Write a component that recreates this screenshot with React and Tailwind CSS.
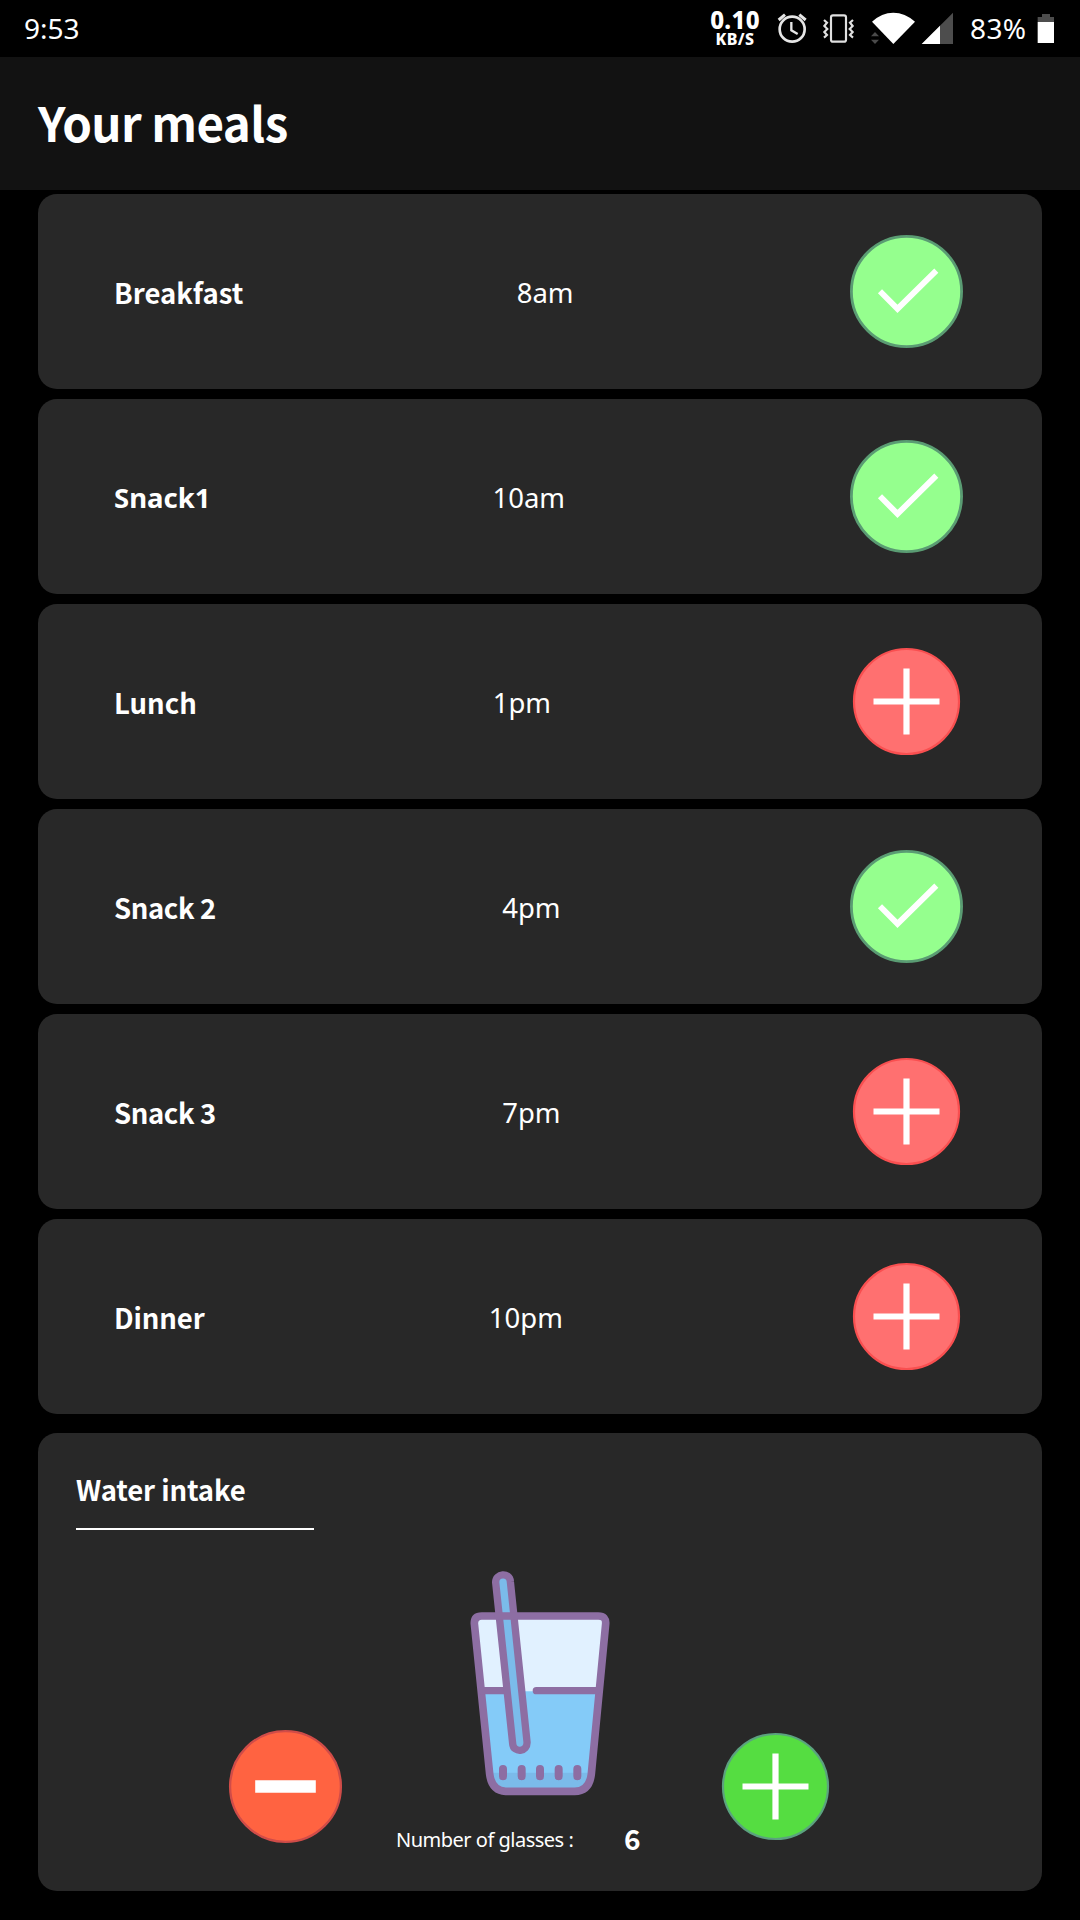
import React from "react";

const meals = [
  { name: "Breakfast", time: "8am", done: true, face: "font-['Noto_Sans_CJK_SC',sans-serif]" },
  { name: "Snack1", time: "10am", done: true, face: "pt-[3px] font-['Noto_Sans',sans-serif]" },
  { name: "Lunch", time: "1pm", done: false, face: "font-['Noto_Sans_CJK_SC',sans-serif]" },
  { name: "Snack 2", time: "4pm", done: true, face: "font-['Noto_Sans_CJK_SC',sans-serif] tracking-[-0.4px]" },
  { name: "Snack 3", time: "7pm", done: false, face: "font-['Noto_Sans_CJK_SC',sans-serif] tracking-[-0.4px]" },
  { name: "Dinner", time: "10pm", done: false, face: "font-['Noto_Sans_CJK_SC',sans-serif] tracking-[-0.1px]" },
];

function CheckCircle() {
  return (
    <svg className="block h-[119px] w-[119px]" viewBox="-0.5 -0.5 119 119" fill="none">
      <circle cx="59" cy="59" r="55.1" fill="#95ff8e" stroke="#5a9c73" strokeWidth="2.8" />
      <path d="M32.5 58.8 50 76.4 88.8 38.1" stroke="#fff" strokeWidth="5.8" />
    </svg>
  );
}

function PlusCircle({ fill, ring }) {
  return (
    <svg className="block h-[119px] w-[119px]" viewBox="-0.5 -0.5 119 119" fill="none">
      <circle cx="59" cy="59" r="52.5" fill={fill} stroke={ring} strokeWidth="2.2" />
      <path d="M59 26v66M26 59h66" stroke="#fff" strokeWidth="6.2" />
    </svg>
  );
}

function MinusCircle() {
  return (
    <svg className="block h-[119px] w-[119px]" viewBox="-0.5 -0.5 119 119" fill="none">
      <circle cx="59" cy="59" r="55.4" fill="#ff6341" stroke="#d04c48" strokeWidth="2.3" />
      <path d="M28.7 59h60.6" stroke="#fff" strokeWidth="12.4" />
    </svg>
  );
}

function WaterGlass() {
  return (
    <svg className="block h-[270px] w-[200px]" viewBox="0 0 600 810" fill="none" strokeLinecap="round" strokeLinejoin="round">
      <path d="M103 220Q103 198 125 198H475Q499 198 497 222L454 672Q448 724 404 724H197Q155 722 149 672Z" fill="#e1f1ff" />
      <path d="M122 424H477L454 672Q448 724 404 724H197Q155 722 149 672Z" fill="#84cbf8" />
      <path d="M148 668H455Q448 724 404 724H197Q155 722 148 668Z" fill="#7bbbea" />
      <path d="M103 220Q103 198 125 198H475Q499 198 497 222L454 672Q448 724 404 724H197Q155 722 149 672Z" stroke="#8d6ea3" strokeWidth="23" />
      <path d="M128 422H200M289 422H470" stroke="#8d6ea3" strokeWidth="22" />
      <path d="M167 97C166 70 209 66 211 94L261 575C264 607 220 610 218 581Z" fill="#7bbbea" stroke="#8d6ea3" strokeWidth="22" />
      <path d="M175 198H225" stroke="#8d6ea3" strokeWidth="22" />
      <path d="M189 657V679M245 657V679M300 657V679M356 657V679M412 657V679" stroke="#8d6ea3" strokeWidth="24" />
    </svg>
  );
}

function AlarmIcon() {
  return (
    <svg className="block h-[57px] w-8" viewBox="258 0 96 171" fill="none" stroke="#e6e6e6">
      <circle cx="306.5" cy="87.5" r="37.5" strokeWidth="8" />
      <path d="M304 66V91L323 102" strokeWidth="7" />
      <path d="M266 60 285 44M347 60 328 44" strokeWidth="9" />
    </svg>
  );
}

function VibrateIcon() {
  return (
    <svg className="block h-[57px] w-[35px]" viewBox="393 0 105 171" fill="none" stroke="#e0e0e0">
      <rect x="423" y="46" width="45" height="79" rx="6" strokeWidth="6.5" />
      <path d="M402 60 411 68 403 78 412 87 403 96 411 105 402 113M489 60 480 68 488 78 479 87 488 96 480 105 489 113" strokeWidth="6.5" />
    </svg>
  );
}

function WifiIcon() {
  return (
    <svg className="block h-[57px] w-12" viewBox="537 0 144 171">
      <path d="M610 132 546 65Q575 38 610 38T675 65Z" fill="#fff" />
      <path d="M543 109 555 96 567 109ZM543 119H567L555 132Z" fill="#4a4a4a" />
    </svg>
  );
}

function SignalIcon() {
  return (
    <svg className="block h-[57px] w-[35px]" viewBox="690 0 105 171">
      <path d="M695 132 789 38V132Z" fill="#4d4d4d" />
      <path d="M695 132 750 77V132Z" fill="#fff" />
    </svg>
  );
}

function BatteryIcon() {
  return (
    <svg className="block h-[57px] w-[22px]" viewBox="1035 0 66 171">
      <path d="M1043 66V51H1056V42H1080V51H1092V66Z" fill="#4d4d4d" />
      <path d="M1043 66H1092V129H1043Z" fill="#fff" />
    </svg>
  );
}

function StatusBar() {
  return (
    <div className="flex h-[57px] items-center justify-between bg-black pl-6 pr-[23px]">
      <span className="text-[28px] leading-[57px]">9:53</span>
      <div className="flex items-center">
        <div className="mr-[11px] flex w-[60px] flex-col items-center whitespace-nowrap font-extrabold">
          <span className="text-[24px] leading-[20px] tracking-[0.3px]">0.10</span>
          <span className="text-[16px] leading-[18px] tracking-[0.4px]">KB/S</span>
        </div>
        <AlarmIcon />
        <span className="ml-[13px]"><VibrateIcon /></span>
        <span className="ml-[13px]"><WifiIcon /></span>
        <span className="ml-[3px]"><SignalIcon /></span>
        <span className="ml-[14px] w-[66px] pl-px text-[28px] leading-[57px] tracking-[0.4px]">83%</span>
        <BatteryIcon />
      </div>
    </div>
  );
}

function MealCard({ meal }) {
  return (
    <div className="flex h-[195px] items-center justify-between rounded-[19px] bg-[#282828] pl-[76px] pr-[76px]">
      <span className={`text-[27.5px] font-bold leading-[40px] ${meal.face}`}>{meal.name}</span>
      <span className="pt-[3px] text-[27.5px] leading-[40px]">{meal.time}</span>
      {meal.done ? <CheckCircle /> : <PlusCircle fill="#ff7070" ring="#f94f50" />}
    </div>
  );
}

export default function App() {
  return (
    <div className="flex h-[1920px] w-[1080px] flex-col overflow-hidden bg-black font-['Noto_Sans',sans-serif] text-white">
      <StatusBar />
      <header className="flex h-[133px] items-center bg-[#121212] pb-[3px] pl-[38px]">
        <h1 className="font-['Noto_Sans_CJK_SC',sans-serif] text-[47.5px] font-bold leading-[64px] tracking-[-0.6px]">Your meals</h1>
      </header>
      <main className="flex flex-col px-[38px] pt-1">
        <div className="flex flex-col gap-[10px]">
          {meals.map((meal) => (
            <MealCard key={meal.name} meal={meal} />
          ))}
        </div>
        <section className="mt-[19px] flex h-[458px] flex-col rounded-[19px] bg-[#282828]">
          <div className="ml-[38px] mt-9 flex h-[61px] w-[238px] flex-col border-b-2 border-white">
            <h2 className="font-['Noto_Sans_CJK_SC',sans-serif] text-[27.5px] font-bold leading-[40px] tracking-[-0.1px]">Water intake</h2>
          </div>
          <div className="mt-5 flex pl-[188px]">
            <span className="mt-[177px]"><MinusCircle /></span>
            <div className="w-[371px]">
              <div className="pl-[95px]"><WaterGlass /></div>
              <div className="mt-1 flex h-[30px] items-center pl-[51px]">
                <span className="w-[228px] pt-px text-[20px] leading-[30px] tracking-[-0.5px]">Number of glasses :</span>
                <span className="pb-[3px] font-['Noto_Sans_CJK_SC',sans-serif] text-[28px] font-bold leading-[30px]">6</span>
              </div>
            </div>
            <span className="mt-[177px]"><PlusCircle fill="#55dd41" ring="#5ba27f" /></span>
          </div>
        </section>
      </main>
    </div>
  );
}
